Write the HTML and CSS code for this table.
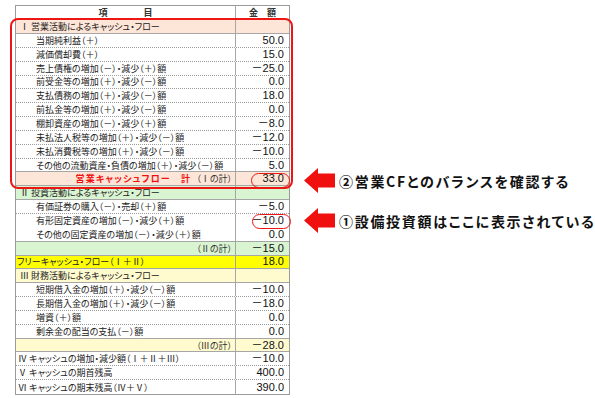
FILE: index.html
```html
<!DOCTYPE html>
<html lang="ja">
<head>
<meta charset="utf-8">
<link rel="stylesheet" href="styles.css">
</head>
<body>
<div class="page">
  <div class="sheet">
    <div class="row head solid"><div class="c1 center">項　　　　目</div><div class="c2 center">金　額</div></div>
    <div class="row sec peach solid"><div class="c1">Ⅰ 営業活動によるキャッシュ・フロー</div><div class="c2"></div></div>
    <div class="row dot"><div class="c1 ind">当期純利益（＋）</div><div class="c2">50.0</div></div>
    <div class="row dot"><div class="c1 ind">減価償却費（＋）</div><div class="c2">15.0</div></div>
    <div class="row dot"><div class="c1 ind">売上債権の増加（－）・減少（＋）額</div><div class="c2">－25.0</div></div>
    <div class="row dot"><div class="c1 ind">前受金等の増加（＋）・減少（－）額</div><div class="c2">0.0</div></div>
    <div class="row dot"><div class="c1 ind">支払債務の増加（＋）・減少（－）額</div><div class="c2">18.0</div></div>
    <div class="row dot"><div class="c1 ind">前払金等の増加（＋）・減少（－）額</div><div class="c2">0.0</div></div>
    <div class="row dot"><div class="c1 ind">棚卸資産の増加（－）・減少（＋）額</div><div class="c2">－8.0</div></div>
    <div class="row dot"><div class="c1 ind">未払法人税等の増加（＋）・減少（－）額</div><div class="c2">－12.0</div></div>
    <div class="row dot"><div class="c1 ind">未払消費税等の増加（＋）・減少（－）額</div><div class="c2">－10.0</div></div>
    <div class="row solid"><div class="c1 ind">その他の流動資産・負債の増加（＋）・減少（－）額</div><div class="c2">5.0</div></div>
    <div class="row peach solid"><div class="c1 right"><span class="red">営業キャッシュフロー　計</span><span class="sub">（Ⅰの計）</span></div><div class="c2">33.0</div></div>
    <div class="row sec green solid"><div class="c1">Ⅱ 投資活動によるキャッシュ・フロー</div><div class="c2"></div></div>
    <div class="row dot"><div class="c1 ind">有価証券の購入（－）・売却（＋）額</div><div class="c2">－5.0</div></div>
    <div class="row"><div class="c1 ind">有形固定資産の増加（－）・減少（＋）額</div><div class="c2">－10.0</div></div>
    <div class="row solid"><div class="c1 ind">その他の固定資産の増加（－）・減少（＋）額</div><div class="c2">0.0</div></div>
    <div class="row green solid"><div class="c1 right"><span class="sub">（Ⅱの計）</span></div><div class="c2">－15.0</div></div>
    <div class="row yellow solid"><div class="c1 flush">フリーキャッシュ・フロー（Ⅰ＋Ⅱ）</div><div class="c2">18.0</div></div>
    <div class="row sec cream solid"><div class="c1">Ⅲ 財務活動によるキャッシュ・フロー</div><div class="c2"></div></div>
    <div class="row dot"><div class="c1 ind">短期借入金の増加（＋）・減少（－）額</div><div class="c2">－10.0</div></div>
    <div class="row dot"><div class="c1 ind">長期借入金の増加（＋）・減少（－）額</div><div class="c2">－18.0</div></div>
    <div class="row dot"><div class="c1 ind">増資（＋）額</div><div class="c2">0.0</div></div>
    <div class="row solid"><div class="c1 ind">剰余金の配当の支払（－）額</div><div class="c2">0.0</div></div>
    <div class="row cream solid"><div class="c1 right"><span class="sub">（Ⅲの計）</span></div><div class="c2">－28.0</div></div>
    <div class="row dot"><div class="c1 tot">Ⅳ キャッシュの増加・減少額（Ⅰ＋Ⅱ＋Ⅲ）</div><div class="c2">－10.0</div></div>
    <div class="row dot"><div class="c1 tot">Ⅴ キャッシュの期首残高</div><div class="c2">400.0</div></div>
    <div class="row last"><div class="c1 tot">Ⅵ キャッシュの期末残高（Ⅳ＋Ⅴ）</div><div class="c2">390.0</div></div>
  </div>

  <div class="ring ring-big"></div>
  <div class="ring ring-op"></div>
  <div class="ring ring-inv"></div>

  <div class="callout callout-balance">
    <svg class="arrow" width="31" height="25" viewBox="0 0 31 25"><polygon points="0,12.5 14,0 14,5.5 31,5.5 31,19.5 14,19.5 14,25" fill="#f01010"/></svg>
    <span class="note">②営業CFとのバランスを確認する</span>
  </div>
  <div class="callout callout-capex">
    <svg class="arrow" width="31" height="25" viewBox="0 0 31 25"><polygon points="0,12.5 14,0 14,5.5 31,5.5 31,19.5 14,19.5 14,25" fill="#f01010"/></svg>
    <span class="note">①設備投資額はここに表示されている</span>
  </div>
</div>
</body>
</html>
```

FILE: styles.css
```css
html, body {
  margin: 0;
  padding: 0;
  background: #ffffff;
}

.page {
  position: relative;
  width: 595px;
  height: 398px;
  padding-top: 5px;
  box-sizing: border-box;
  overflow: hidden;
}

.sheet {
  margin-left: 15px;
  width: 275px;
  border: 1px solid #9a9a9a;
  box-sizing: border-box;
  font-family: "Noto Sans CJK JP", sans-serif;
  font-feature-settings: "palt";
  font-size: 9px;
  color: #222;
}

.row {
  display: grid;
  grid-template-columns: 219px 54px;
  height: 13.85px;
  box-sizing: border-box;
}

.row.head {
  height: 14.2px;
}

.row.solid { border-bottom: 1px solid #a6a6a6; }
.row.dot { border-bottom: 1px dotted #9c9c9c; }

.c1, .c2 {
  display: flex;
  align-items: center;
  white-space: nowrap;
  overflow: hidden;
  line-height: 1;
}

.c1 {
  padding-left: 4px;
  letter-spacing: 0;
}

.c2 {
  border-left: 1px solid #a6a6a6;
  justify-content: flex-end;
  padding-right: 5px;
  font-family: "Liberation Sans", "Noto Sans CJK JP", sans-serif;
  font-feature-settings: normal;
  font-size: 11px;
  color: #111;
}

.c1.ind { padding-left: 20px; }
.c1.flush { padding-left: 1px; }
.c1.tot { padding-left: 2px; }
.c1.right { justify-content: flex-end; padding-right: 3px; }
.center { justify-content: center !important; padding: 0 !important; }

.head .c1, .head .c2 {
  font-family: "Noto Sans CJK JP", sans-serif;
  font-size: 9px;
  font-weight: 700;
  color: #333;
}

.peach { background: #fde6d8; }
.green { background: #d9f4d1; }
.yellow { background: #ffff00; }
.cream { background: #fffbcf; }

.red {
  color: #f01010;
  font-weight: 700;
  letter-spacing: 1.2px;
  margin-right: 5px;
}

.sub { color: #333; }

.ring {
  position: absolute;
  border: 2px solid #ee1515;
  box-sizing: border-box;
}

.ring-big {
  left: 10px;
  top: 18px;
  width: 283px;
  height: 171px;
  border-radius: 8px;
}

.ring-op {
  left: 251px;
  top: 173px;
  width: 39px;
  height: 15px;
  border-radius: 8px;
  border-width: 1.5px;
}

.ring-inv {
  left: 252px;
  top: 214px;
  width: 39px;
  height: 15px;
  border-radius: 8px;
  border-width: 1.5px;
}

.callout {
  position: absolute;
  left: 304px;
  display: flex;
  align-items: center;
  gap: 4px;
}

.callout-balance { top: 168px; }
.callout-capex { top: 208px; }

.arrow { display: block; flex: none; }

.note {
  font-family: "Noto Sans CJK JP", sans-serif;
  font-feature-settings: "palt";
  font-weight: 700;
  font-size: 14px;
  letter-spacing: 1.7px;
  color: #111;
  white-space: nowrap;
}
```
